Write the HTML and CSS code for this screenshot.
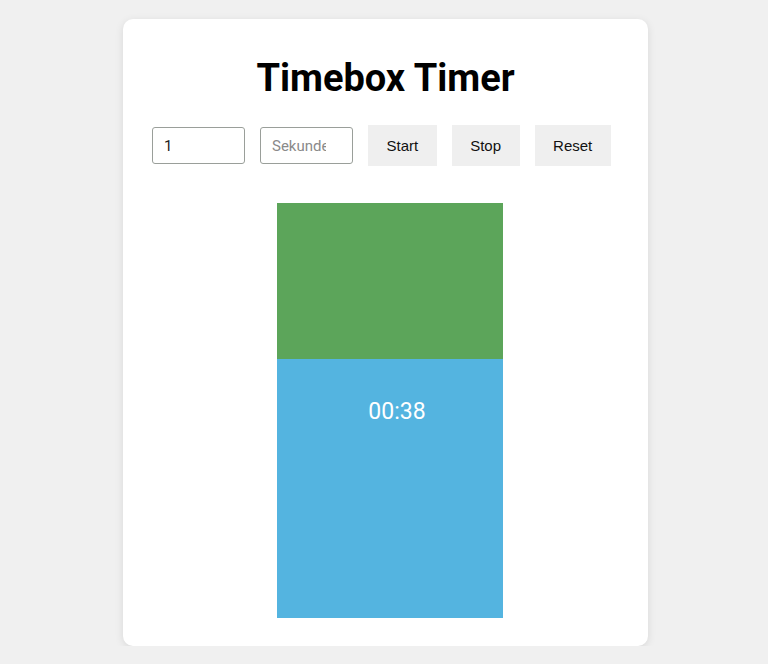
FILE: index.html
```html
<!DOCTYPE html>
<html lang="de">

<head>
    <meta charset="UTF-8" />
    <meta name="viewport" content="width=device-width, initial-scale=1.0" />
    <title>Timebox Timer</title>
    <link rel="stylesheet" href="styles.css">
</head>

<body>
    <div class="container">
        <h1>Timebox Timer</h1>
        <!-- Eingabe und Steuerung -->
        <div class="controls">
            <input type="number" id="minutes" value="1" />
            <input type="number" id="seconds" placeholder="Sekunden" />
            <button id="start">Start</button>
            <button id="stop">Stop</button>
            <button id="reset">Reset</button>
        </div>
        <!-- Timebox Anzeige -->
        <div class="box-wrap">
            <div class="timebox">
                <div class="elapsed" style="height: 37.6%"></div>
                <div class="remaining"></div>
                <span class="time" id="time">00:38</span>
            </div>
        </div>
    </div>
</body>

</html>
```

FILE: styles.css
```css
* {
    margin: 0;
    padding: 0;
    box-sizing: border-box;
}

body {
    background: #f0f0f0;
    font-family: Roboto, "Liberation Sans", Arial, sans-serif;
}

.container {
    width: 525px;
    height: 627px;
    margin: 19px 0 0 123px;
    background: #fff;
    border-radius: 10px;
    box-shadow: 0 2px 8px rgba(0, 0, 0, 0.1);
    padding-top: 37px;
}

h1 {
    text-align: center;
    font-size: 38px;
    font-weight: bold;
    color: #000;
    line-height: 45px;
}

.controls {
    display: flex;
    align-items: center;
    gap: 15px;
    margin-top: 24px;
    padding-left: 29px;
}

.controls input {
    width: 93px;
    height: 37px;
    border: 1px solid #9a9f9a;
    border-radius: 3px;
    padding: 0 11px;
    font: 15px Roboto, "Liberation Sans", sans-serif;
    color: #222;
    outline: none;
}

.controls input::placeholder {
    color: #8a8a8a;
}

.controls button {
    height: 41px;
    padding: 0 18.5px;
    border: none;
    background: #efefef;
    font: 15px "Liberation Sans", Arial, sans-serif;
    color: #111;
    cursor: pointer;
}

.box-wrap {
    margin-top: 37px;
    padding-left: 154px;
}

.timebox {
    position: relative;
    width: 226px;
    height: 415px;
    display: flex;
    flex-direction: column;
}

.elapsed {
    background: #5ca55a;
}

.remaining {
    flex: 1;
    background: #54b4e0;
}

.time {
    position: absolute;
    top: 50%;
    left: 50%;
    transform: translate(calc(-50% + 7px), -50%);
    color: #fff;
    font-size: 23px;
}
```
